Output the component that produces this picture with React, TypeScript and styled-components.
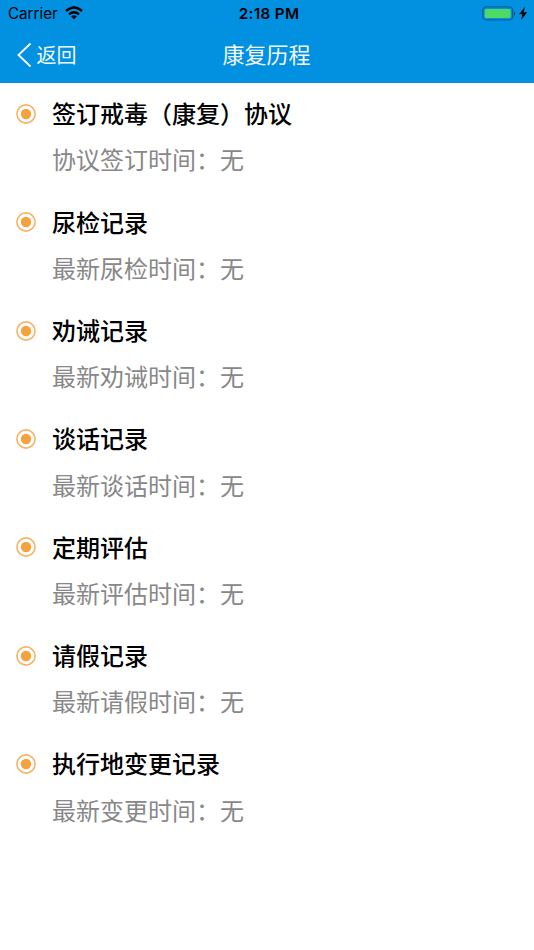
import React from 'react';
import styled, { createGlobalStyle } from 'styled-components';

const Global = createGlobalStyle`
  * { box-sizing: border-box; }
  body { margin: 0; background: #fff; font-family: Inter, "Noto Sans CJK SC", sans-serif; }
`;
const Screen = styled.main`
  width: 534px; height: 950px; background: #fff; overflow: hidden;
`;
const Header = styled.header`
  height: 82.7px; background: #0290e1;
`;
const StatusBar = styled.div`
  height: 27px; display: grid; grid-template-columns: 1fr auto 1fr;
  align-items: center; padding: 0 6px 0 8px; color: #000; font-size: 15.2px;
`;
const Carrier = styled.div`
  display: flex; align-items: center; gap: 7px;
`;
const WifiIcon = styled.svg`
  margin-bottom: 1px;
`;
const Clock = styled.time`
  font-weight: 600; letter-spacing: 0.35px; padding: 0 0 1px 2px;
`;
const Power = styled.div`
  display: flex; justify-content: flex-end; align-items: center;
`;
const NavBar = styled.nav`
  height: 56px; display: grid; grid-template-columns: 1fr auto 1fr;
  align-items: center; padding: 0 17px 0 16px; color: #fff;
  font-family: "Noto Sans CJK SC", sans-serif;
`;
const Back = styled.a`
  display: flex; align-items: center; gap: 3.5px; font-size: 20px; line-height: 30px; font-weight: 400; color: #f2f9fe;
`;
const Title = styled.h1`
  margin: 0 0 4px; font-size: 22px; line-height: 32px; font-weight: 400; color: #f2f9fe;
`;
const Timeline = styled.ol`
  margin: 0; padding: 0; list-style: none;
`;
const Entry = styled.li`
  height: 108.35px; display: grid; grid-template-columns: 52px 1fr; padding-top: 12.5px;
  font-family: "Noto Sans CJK SC", sans-serif;
`;
const Marker = styled.svg`
  margin: 8.8px 0 0 16px;
`;
const Name = styled.h2`
  margin: 0; font-size: 24px; line-height: 36px; font-weight: 500; color: #000;
`;
const Detail = styled.p`
  margin: 10.3px 0 0; font-size: 24px; line-height: 36px; font-weight: 400; color: #888;
`;

const entries = [
  ['签订戒毒（康复）协议', '协议签订时间：无'],
  ['尿检记录', '最新尿检时间：无'],
  ['劝诫记录', '最新劝诫时间：无'],
  ['谈话记录', '最新谈话时间：无'],
  ['定期评估', '最新评估时间：无'],
  ['请假记录', '最新请假时间：无'],
  ['执行地变更记录', '最新变更时间：无'],
];

export default function App() {
  return (
    <Screen lang="zh-CN">
      <Global />
      <Header>
        <StatusBar>
          <Carrier>
            Carrier
            <WifiIcon width="18" height="14" viewBox="0 0 18 14" fill="none" stroke="#000" strokeWidth="2.5">
              <path d="M1 5 Q9 -2 17 5" />
              <path d="M4 8.4 Q9 4.2 14 8.4" />
              <path d="M6.2 10.4 Q9 8.3 11.8 10.4 L9 13.2Z" fill="#000" stroke="none" />
            </WifiIcon>
          </Carrier>
          <Clock>2:18 PM</Clock>
          <Power>
            <svg width="46" height="16" viewBox="0 0 46 16">
              <rect x="0.7" y="0.9" width="30" height="13" rx="3.5" fill="none" stroke="#01629a" strokeWidth="1.4" />
              <rect x="2.7" y="2.9" width="26" height="9" rx="1.5" fill="#4cd964" />
              <path d="M32 5.2 Q34 7.7 32 10.2Z" fill="#024a75" />
              <path d="M43 0.8 L37 8.2 H40.5 L39 14 L45.2 6.3 H41.6Z" />
            </svg>
          </Power>
        </StatusBar>
        <NavBar>
          <Back>
            <svg width="17" height="26" viewBox="0 0 17 26" fill="none" stroke="#fff" strokeWidth="1.8">
              <path d="M14.5 1.5 L2.5 13 L14.5 24.5" />
            </svg>
            返回
          </Back>
          <Title>康复历程</Title>
        </NavBar>
      </Header>
      <Timeline>
        {entries.map(([name, detail]) => (
          <Entry key={name}>
            <Marker width="20" height="20" viewBox="0 0 20 20">
              <circle cx="10" cy="10" r="9.1" fill="none" stroke="#f7b368" strokeWidth="1.6" />
              <circle cx="10" cy="10" r="5.2" fill="#f3a23e" />
            </Marker>
            <div>
              <Name>{name}</Name>
              <Detail>{detail}</Detail>
            </div>
          </Entry>
        ))}
      </Timeline>
    </Screen>
  );
}
